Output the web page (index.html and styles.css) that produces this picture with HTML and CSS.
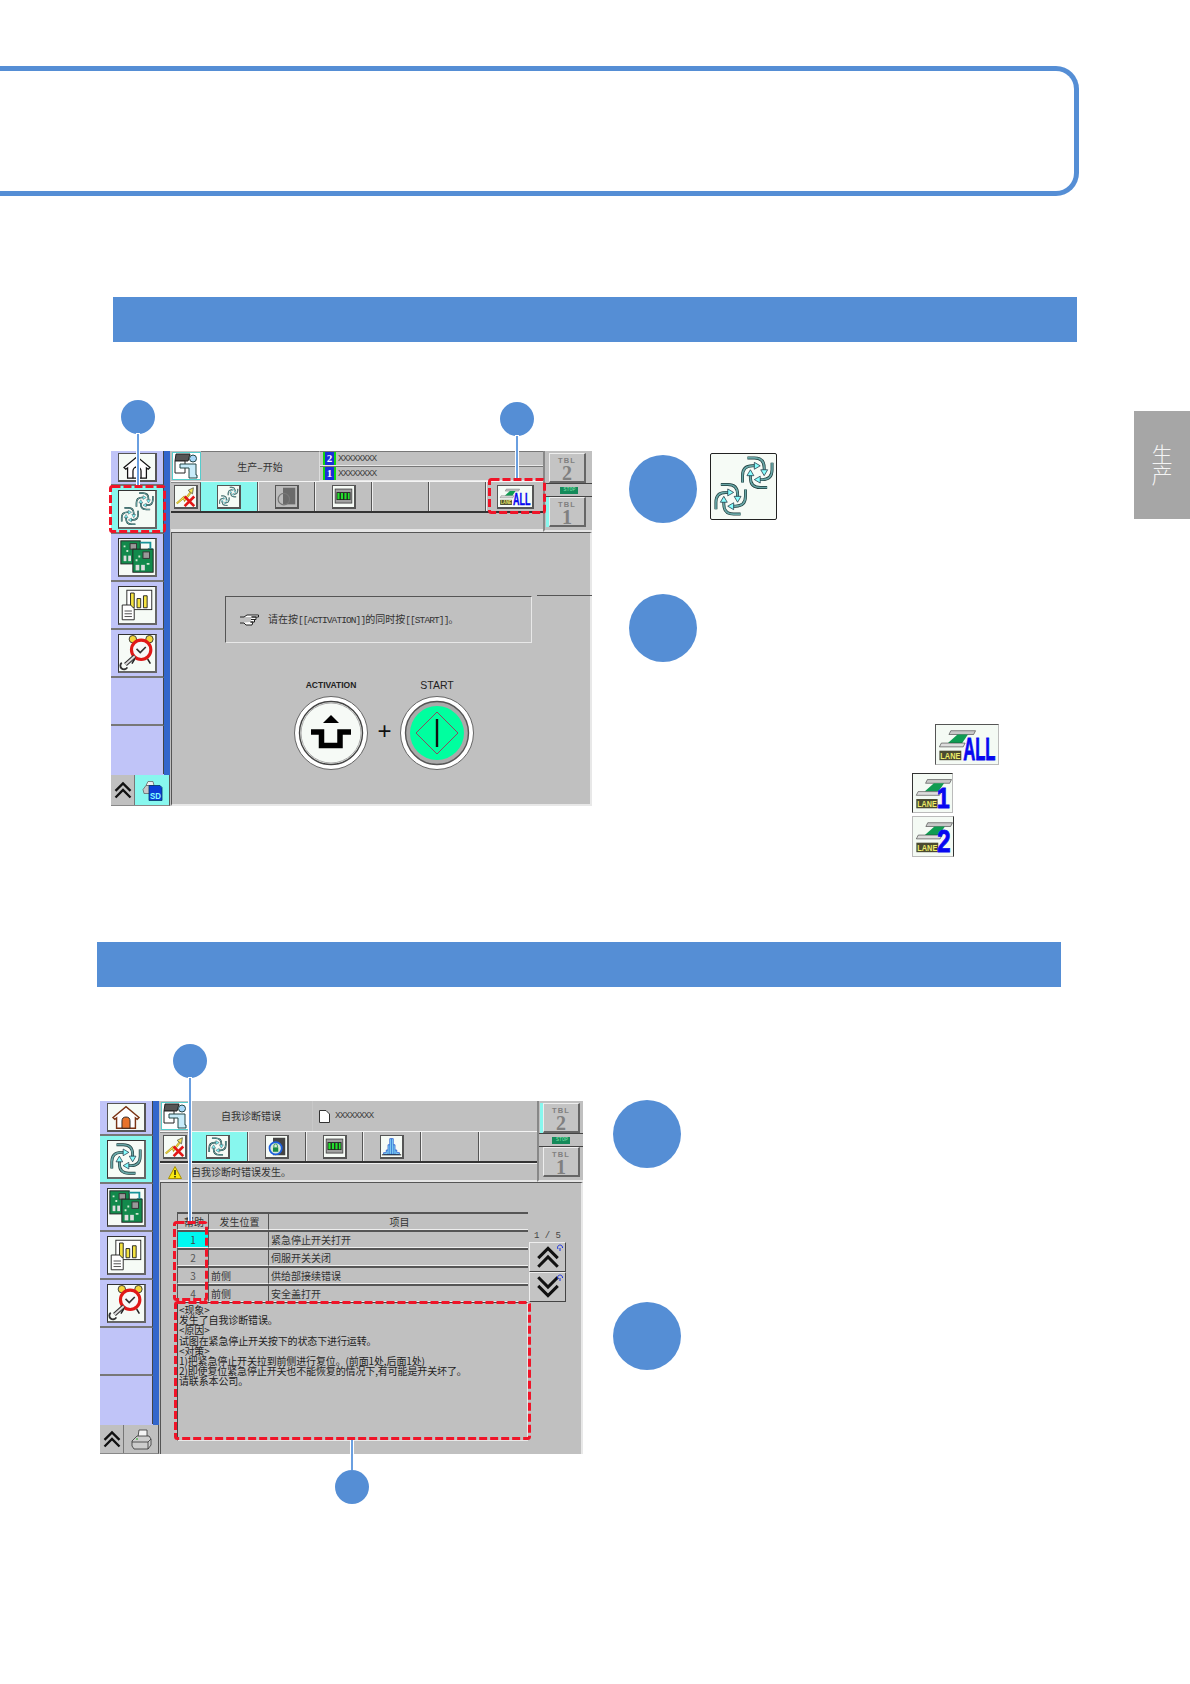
FILE: index.html
```html
<!DOCTYPE html>
<html lang="zh">
<head>
<meta charset="utf-8">
<title>生产</title>
<link rel="stylesheet" href="styles.css">
</head>
<body>
<svg class="defs" width="0" height="0" aria-hidden="true">
  <defs>
    <g id="arm">
      <path d="M-15 10V3Q-15-7-5-7H-2" fill="none" stroke="#1c3a3a" stroke-width="3"/>
      <path d="M-15 10V3Q-15-7-5-7H-2" fill="none" stroke="#68a6a6" stroke-width="1.700"/>
      <path d="M-3-10.500 3-7-3-3.500Z" fill="#8ff" stroke="#123" stroke-width=".7"/>
    </g>
    <g id="pin">
      <use href="#arm"/>
      <use href="#arm" transform="rotate(90)"/>
      <use href="#arm" transform="rotate(180)"/>
      <use href="#arm" transform="rotate(270)"/>
    </g>
    <symbol id="swirl-two" viewBox="0 0 66 66"><use href="#pin" transform="translate(20 46)"/><use href="#pin" transform="translate(47 19)"/></symbol>
    <symbol id="swirl-one" viewBox="-19 -19 38 38"><use href="#pin"/></symbol>
    <symbol id="home-a" viewBox="0 0 39 29">
      <path fill="#fff" stroke="#111" stroke-width="1.400" d="M5 15 19.500 3 34 15 32 17 30 15.500V27H9V15.500L7 17Z"/>
      <path fill="none" stroke="#111" stroke-width="1.400" d="M15 27V19a4.500 4.500 0 0 1 9 0V27"/>
    </symbol>
    <symbol id="home-b" viewBox="0 0 39 29">
      <path fill="#fff" stroke="#7a3414" stroke-width="1.600" d="M5 15 19.500 3 34 15 32 17 30 15.500V27H9V15.500L7 17Z"/>
      <path fill="#e8722a" stroke="#222" d="M15 27V19a4.500 4.500 0 0 1 9 0V27Z"/>
    </symbol>
    <symbol id="pcb" viewBox="0 0 39 39">
      <rect x="2" y="2" width="21" height="25" fill="#128a4c" stroke="#222"/>
      <rect x="12" y="5" width="7" height="6" fill="#999" stroke="#333"/>
      <rect x="5" y="18" width="3" height="6" fill="#ddd"/><rect x="10" y="18" width="3" height="6" fill="#ddd"/>
      <path d="M5 7h2v2H5zM8 12h2v2H8z" fill="#cfe8cf"/>
      <path d="M23 4H34V10" fill="none" stroke="#17949a" stroke-width="2"/><path d="M31 10H37L34 14Z" fill="#17949a"/>
      <rect x="15" y="11" width="22" height="25" fill="#128a4c" stroke="#222"/>
      <rect x="26" y="14" width="7" height="7" fill="#999" stroke="#333"/>
      <rect x="18" y="28" width="4" height="6" fill="#ddd"/><rect x="24" y="28" width="4" height="6" fill="#ddd"/>
      <path d="M18 22h2v2h-2zM21 18h2v2h-2zM30 26h3v2h-3z" fill="#cfe8cf"/>
    </symbol>
    <symbol id="chart" viewBox="0 0 39 39">
      <rect x="8.500" y="3.500" width="27" height="21" fill="#fff" stroke="#222"/>
      <path d="M12.500 6.500h4v16h-4zM19.500 12.500h4v10h-4zM26.500 9.500h4v13h-4z" fill="#f5e342" stroke="#222"/>
      <path d="M3.500 19.500h9l4 4v12h-13z" fill="#fff" stroke="#222"/>
      <path d="M6 26h8M6 29h8M6 32h8" stroke="#444"/>
    </symbol>
    <symbol id="alarm" viewBox="0 0 39 39">
      <circle cx="15" cy="4.500" r="4" fill="#f3d53a" stroke="#333"/><circle cx="33" cy="4.500" r="4" fill="#f3d53a" stroke="#333"/>
      <path d="M17 26 14 31M31 26 34 31" stroke="#222" stroke-width="1.600"/>
      <circle cx="24" cy="16" r="10.500" fill="#f8f8f8" stroke="#e01818" stroke-width="3.400"/>
      <path d="M19 15 23 19 29 13" fill="none" stroke="#333" stroke-width="1.800"/>
      <path d="M17 23 7 32" stroke="#333" stroke-width="4.500"/><path d="M17 23 7 32" stroke="#ddd" stroke-width="2"/>
      <path d="M3 30a4 4 0 1 0 6 5" fill="none" stroke="#333" stroke-width="2"/>
    </symbol>
    <symbol id="person" viewBox="0 0 29 28">
      <rect x=".5" y=".5" width="28" height="27" fill="#fff" stroke="#5cc"/>
      <path d="M4 2 18 2 16 9 3 9Z" fill="#555" stroke="#222"/>
      <path d="M3 9H13V21H3Z" fill="#fff" stroke="#222"/>
      <circle cx="21" cy="6.500" r="3.500" fill="#a8d8f8" stroke="#244"/>
      <path d="M8 12H24V23H25V26H17V16H8Z" fill="#c8ecfa" stroke="#244"/>
    </symbol>
    <symbol id="cancel" viewBox="0 0 24 24">
      <path d="M2 20 10 13 11 16 19 6" fill="none" stroke="#b89a20" stroke-width="2.400"/><path d="M2 20 10 13 11 16 19 6" fill="none" stroke="#f7ea52" stroke-width="1.100"/>
      <path d="M15 5 21 2 20 9Z" fill="#f7ea52" stroke="#665"/>
      <path d="M11 12 22 23M22 12 11 23" stroke="#e21616" stroke-width="3"/>
    </symbol>
    <symbol id="led" viewBox="0 0 24 24">
      <rect x="2.500" y="3.500" width="19" height="16" fill="#a0a0a0" stroke="#444"/>
      <rect x="4" y="7" width="16" height="9" fill="#222"/>
      <path d="M5 8h2.500v7H5zM13 8h2.500v7H13zM17 8h2v7h-2z" fill="#22e02c"/><path d="M9 8h2.500v7H9z" fill="#22e02c"/>
    </symbol>
    <symbol id="dim-doc" viewBox="0 0 24 24">
      <path d="M8 2H22V21H8Z" fill="#6a6a6a"/>
      <circle cx="9" cy="15" r="6.500" fill="none" stroke="#787878" stroke-width="1.400"/>
    </symbol>
    <symbol id="lock-doc" viewBox="0 0 24 24">
      <path d="M8 2H22V22H8Z" fill="#444"/>
      <circle cx="11" cy="14" r="7" fill="#d8e8d8" stroke="#1b60e0" stroke-width="2"/>
      <path d="M8 13h6v5H8z" fill="#188a44"/><path d="M9 13v-2a2 2 0 0 1 4 0v2" fill="none" stroke="#188a44"/>
    </symbol>
    <symbol id="bell-curve" viewBox="0 0 24 24">
      <path d="M3 21V19H6V16H8V10H10V3H14V10H16V16H18V19H21V21Z" fill="#8be0f8" stroke="#1448c8" stroke-width=".8"/>
      <path d="M8 21V16M10 21V10M12 21V3M14 21V10M16 21V16" stroke="#1448c8" stroke-width=".7"/>
      <path d="M1 21.500H23" stroke="#111"/>
    </symbol>
    <symbol id="chev-up" viewBox="0 0 24 24"><path d="M3 13 12 4 21 13M3 21 12 12 21 21" fill="none" stroke="#111" stroke-width="2.800"/></symbol>
    <symbol id="chev-down" viewBox="0 0 24 24"><path d="M3 3 12 12 21 3M3 11 12 20 21 11" fill="none" stroke="#111" stroke-width="2.800"/></symbol>
    <symbol id="sd-print" viewBox="0 0 21 20">
      <path d="M1 9 4 5H10V13H2Z" fill="#c8c8c8" stroke="#666" stroke-width=".8"/><path d="M4 5 6 1H11L12 5Z" fill="#eee" stroke="#666" stroke-width=".8"/>
      <path d="M7 5H18L20 7V20H7Z" fill="#0b3fd8" stroke="#036" stroke-width=".8"/>
      <text x="13.500" y="18" textLength="11" lengthAdjust="spacingAndGlyphs" class="svg-sd">SD</text>
    </symbol>
    <symbol id="printer" viewBox="0 0 21 21">
      <path d="M7 8 8 1H16L16 8Z" fill="#f4f4f4" stroke="#333" stroke-width=".8"/>
      <path d="M1 12 6 7H18L20 10V16L17 20H3L1 17Z" fill="#ccc" stroke="#333" stroke-width=".8"/>
      <path d="M1 13H17L20 10M17 13V20" fill="none" stroke="#333" stroke-width=".8"/>
      <path d="M5 10h2" stroke="#2a2"/>
    </symbol>
    <symbol id="hand" viewBox="0 0 21 13">
      <path d="M1 4H5L8 2H19.500V4H12.500M12.500 4H17V6.500H12M12 6.500H15.500V9H11.500M11.500 9H14L13 12H7L5 10H1" fill="#fff" stroke="#222"/>
    </symbol>
    <g id="lane-base">
      <path d="M15 6H41L39 10H13Z" fill="#c8c8c8" stroke="#333" stroke-width=".6"/>
      <path d="M22 10H33L27 19H12Z" fill="#0f9c52"/>
      <path d="M5 19H30L28 23H3Z" fill="#ddd" stroke="#333" stroke-width=".6"/>
      <rect x="3" y="27" width="23" height="10" fill="#4a4a30"/>
      <text x="14.500" y="36" text-anchor="middle" textLength="21" lengthAdjust="spacingAndGlyphs" class="svg-lane">LANE</text>
    </g>
    <symbol id="lane-all" viewBox="0 0 64 41">
      <use href="#lane-base"/>
      <text x="28" y="37" textLength="34" lengthAdjust="spacingAndGlyphs" class="svg-big">ALL</text>
    </symbol>
    <symbol id="lane-1" viewBox="0 0 41 41">
      <use href="#lane-base"/>
      <text x="25" y="37" textLength="14" lengthAdjust="spacingAndGlyphs" class="svg-big">1</text>
    </symbol>
    <symbol id="lane-2" viewBox="0 0 41 41">
      <use href="#lane-base"/>
      <text x="25" y="37" textLength="14" lengthAdjust="spacingAndGlyphs" class="svg-big">2</text>
    </symbol>
    <symbol id="btn-activation" viewBox="0 0 74 74">
      <circle cx="37" cy="37" r="36.500" fill="#fff" stroke="#666"/>
      <circle cx="37" cy="37" r="31.500" fill="#f6faf6" stroke="#444" stroke-width="1.400"/>
      <circle cx="37" cy="37" r="30" fill="none" stroke="#aaa"/>
      <path d="M29 27 37 19 45 27Z" fill="#000"/>
      <path d="M17 36H27.500V49.500H46V36H57" fill="none" stroke="#000" stroke-width="5.500"/>
    </symbol>
    <symbol id="btn-start" viewBox="0 0 74 74">
      <circle cx="37" cy="37" r="36.500" fill="#fff" stroke="#666"/>
      <circle cx="37" cy="37" r="31.500" fill="#aaa" stroke="#555" stroke-width="1.400"/>
      <circle cx="37" cy="37" r="27" fill="#00ff9f"/>
      <path d="M37 16 58 37 37 58 16 37Z" fill="none" stroke="#8a4a60"/>
      <path d="M37 23V51" stroke="#111" stroke-width="2.400"/>
    </symbol>
    <symbol id="doc" viewBox="0 0 11 13"><path d="M.5.500H7L10.500 4V12.500H.5Z" fill="#fff" stroke="#333"/></symbol>
    <symbol id="warn" viewBox="0 0 14 13"><path d="M7 .5 13.500 12.500H.5Z" fill="#f8e810" stroke="#a89000"/><path d="M7 4V9M7 10V11.500" stroke="#111" stroke-width="1.400"/></symbol>
    <symbol id="refresh" viewBox="0 0 7 7"><path d="M1 5A2.500 2.500 0 1 1 5.500 4" fill="none" stroke="#1830e0"/><path d="M3 4V7" stroke="#1830e0"/></symbol>
  </defs>
</svg>

<div class="page">
  <div class="outline"></div>

  <div class="bar bar-one"></div>
  <section class="work work-one">
    <div class="screen screen-a">
      <aside class="rail">
        <div class="rail-items">
          <div class="rail-item rail-home"><svg class="ico ico-home"><use href="#home-a"/></svg></div>
          <div class="rail-item rail-on"><svg class="ico ico-rail"><use href="#swirl-two"/></svg></div>
          <div class="rail-item"><svg class="ico ico-rail"><use href="#pcb"/></svg></div>
          <div class="rail-item"><svg class="ico ico-rail"><use href="#chart"/></svg></div>
          <div class="rail-item"><svg class="ico ico-rail"><use href="#alarm"/></svg></div>
          <div class="rail-item"></div>
          <div class="rail-item"></div>
        </div>
        <div class="rail-foot">
          <div class="foot-up"><svg class="chev-foot"><use href="#chev-up"/></svg></div>
          <div class="foot-tool foot-on"><svg class="foot-svg"><use href="#sd-print"/></svg></div>
        </div>
      </aside>
      <div class="main">
        <div class="top">
          <div class="top-left">
            <div class="head-row">
              <svg class="person"><use href="#person"/></svg>
              <div class="title title-a">生产–开始</div>
              <div class="lots">
                <div class="lot"><span class="lot-no">2</span><span class="lot-name">XXXXXXXX</span></div>
                <div class="lot"><span class="lot-no">1</span><span class="lot-name">XXXXXXXX</span></div>
              </div>
            </div>
            <div class="tab-row">
              <div class="tab tab-x"><svg class="ico ico-tab"><use href="#cancel"/></svg></div>
              <div class="tab tab-on"><svg class="ico ico-tab"><use href="#swirl-two"/></svg></div>
              <div class="tab"><svg class="ico ico-tab ico-dim"><use href="#dim-doc"/></svg></div>
              <div class="tab"><svg class="ico ico-tab"><use href="#led"/></svg></div>
              <div class="tab"></div>
              <div class="tab"></div>
              <div class="tab"><svg class="ico ico-lane"><use href="#lane-all"/></svg></div>
            </div>
            <div class="msg-row"></div>
          </div>
          <div class="tables tables-a">
            <div class="tbl"><span class="tbl-name">TBL</span><span class="tbl-no">2</span></div>
            <div class="status"><span class="pill">STOP</span></div>
            <div class="tbl tbl-lit"><span class="tbl-name">TBL</span><span class="tbl-no">1</span></div>
          </div>
        </div>
        <div class="panel panel-a">
          <div class="notice">
            <svg class="hand"><use href="#hand"/></svg>
            <span class="notice-text">请在按<span class="mono">[[ACTIVATION]]</span>的同时按<span class="mono">[[START]]</span>。</span>
          </div>
          <div class="actions">
            <div class="action"><div class="action-label action-bold">ACTIVATION</div><svg class="push"><use href="#btn-activation"/></svg></div>
            <div class="plus">+</div>
            <div class="action"><div class="action-label">START</div><svg class="push"><use href="#btn-start"/></svg></div>
          </div>
        </div>
      </div>
      <div class="call call-a"><i class="dot"></i><i class="lead lead-a"></i></div>
      <div class="call call-b"><i class="dot"></i><i class="lead lead-b"></i></div>
      <svg class="mark mark-a" width="57" height="48"><rect x="1.500" y="1.500" width="54" height="45" rx="2"/></svg>
      <svg class="mark mark-b" width="58" height="36"><rect x="1.500" y="1.500" width="55" height="33" rx="2"/></svg>
    </div>

    <div class="steps steps-one">
      <div class="step step-1"><i class="num"></i><svg class="big-icon"><use href="#swirl-two"/></svg></div>
      <div class="step step-2"><i class="num"></i></div>
      <svg class="lane-pic lane-all"><use href="#lane-all"/></svg>
      <svg class="lane-pic lane-1"><use href="#lane-1"/></svg>
      <svg class="lane-pic lane-2"><use href="#lane-2"/></svg>
    </div>
  </section>

  <div class="bar bar-two"></div>
  <section class="work work-two">
    <div class="screen screen-b">
      <aside class="rail">
        <div class="rail-items">
          <div class="rail-item rail-home"><svg class="ico ico-home"><use href="#home-b"/></svg></div>
          <div class="rail-item rail-on"><svg class="ico ico-rail"><use href="#swirl-one"/></svg></div>
          <div class="rail-item"><svg class="ico ico-rail"><use href="#pcb"/></svg></div>
          <div class="rail-item"><svg class="ico ico-rail"><use href="#chart"/></svg></div>
          <div class="rail-item"><svg class="ico ico-rail"><use href="#alarm"/></svg></div>
          <div class="rail-item"></div>
          <div class="rail-item"></div>
        </div>
        <div class="rail-foot">
          <div class="foot-up"><svg class="chev-foot"><use href="#chev-up"/></svg></div>
          <div class="foot-tool"><svg class="foot-svg"><use href="#printer"/></svg></div>
        </div>
      </aside>
      <div class="main">
        <div class="top">
          <div class="top-left">
            <div class="head-row">
              <svg class="person"><use href="#person"/></svg>
              <div class="title title-b">自我诊断错误</div>
              <div class="file"><svg class="doc"><use href="#doc"/></svg><span class="lot-name">XXXXXXXX</span></div>
            </div>
            <div class="tab-row">
              <div class="tab tab-x"><svg class="ico ico-tab"><use href="#cancel"/></svg></div>
              <div class="tab tab-on"><svg class="ico ico-tab"><use href="#swirl-one"/></svg></div>
              <div class="tab"><svg class="ico ico-tab"><use href="#lock-doc"/></svg></div>
              <div class="tab"><svg class="ico ico-tab"><use href="#led"/></svg></div>
              <div class="tab"><svg class="ico ico-tab"><use href="#bell-curve"/></svg></div>
              <div class="tab"></div>
              <div class="tab"></div>
            </div>
            <div class="msg-row msg-warn"><svg class="warn"><use href="#warn"/></svg><span>自我诊断时错误发生。</span></div>
          </div>
          <div class="tables tables-b">
            <div class="tbl tbl-lit"><span class="tbl-name">TBL</span><span class="tbl-no">2</span></div>
            <div class="status"><span class="pill">STOP</span></div>
            <div class="tbl"><span class="tbl-name">TBL</span><span class="tbl-no">1</span></div>
          </div>
        </div>
        <div class="panel panel-b">
          <div class="err-col">
            <table class="err-table">
              <thead><tr><th class="col-no">帮助</th><th class="col-place">发生位置</th><th>项目</th></tr></thead>
              <tbody>
                <tr><td class="cell-no cell-on">1</td><td></td><td>紧急停止开关打开</td></tr>
                <tr><td class="cell-no">2</td><td></td><td>伺服开关关闭</td></tr>
                <tr><td class="cell-no">3</td><td>前侧</td><td>供给部接续错误</td></tr>
                <tr><td class="cell-no">4</td><td>前侧</td><td>安全盖打开</td></tr>
              </tbody>
            </table>
            <div class="help">
              <p>&lt;现象&gt;</p>
              <p>发生了自我诊断错误。</p>
              <p>&lt;原因&gt;</p>
              <p>试图在紧急停止开关按下的状态下进行运转。</p>
              <p>&lt;对策&gt;</p>
              <p>1)把紧急停止开关拉到前侧进行复位。(前面1处,后面1处)</p>
              <p>2)即使复位紧急停止开关也不能恢复的情况下,有可能是开关坏了。</p>
              <p>请联系本公司。</p>
            </div>
          </div>
          <div class="pager">
            <div class="pager-count">1 / 5</div>
            <div class="pager-btn"><svg class="chev-page"><use href="#chev-up"/></svg><svg class="tiny"><use href="#refresh"/></svg></div>
            <div class="pager-btn"><svg class="chev-page"><use href="#chev-down"/></svg><svg class="tiny"><use href="#refresh"/></svg></div>
          </div>
        </div>
      </div>
      <div class="call call-c"><i class="dot"></i><i class="lead lead-c"></i></div>
      <div class="call call-d"><i class="lead lead-d"></i><i class="dot"></i></div>
      <svg class="mark mark-c" width="35" height="80"><rect x="1.500" y="1.500" width="32" height="77" rx="2"/></svg>
      <svg class="mark mark-d" width="357" height="139"><rect x="1.500" y="1.500" width="354" height="136" rx="2"/></svg>
    </div>

    <div class="steps steps-two">
      <div class="step step-3"><i class="num"></i></div>
      <div class="step step-4"><i class="num"></i></div>
    </div>
  </section>
</div>

<div class="side-tab">生<br>产</div>
</body>
</html>
```

FILE: styles.css
```css
* { box-sizing: border-box; }
html, body { margin: 0; padding: 0; background: #fff; }
body {
  position: relative;
  width: 1190px;
  height: 1684px;
  overflow: hidden;
  font-family: "Noto Sans CJK SC", "Liberation Sans", sans-serif;
  color: #222;
}
.defs { position: absolute; }

.page { padding-top: 66px; }
.outline {
  width: 1079px;
  height: 130px;
  border: 5px solid #558ed5;
  border-left: 0;
  border-radius: 0 23px 23px 0;
}
.bar { height: 45px; width: 964px; background: #558ed5; }
.bar-one { margin: 101px 0 0 113px; }
.bar-two { margin: 0 0 0 97px; }

.work { display: flex; align-items: flex-start; }
.work-one { margin: 109px 0 0 111px; height: 491px; gap: 37px; }
.work-two { margin: 114px 0 0 100px; gap: 30px; }

/* Touch-panel screenshots */
.screen {
  position: relative;
  display: flex;
  background: #c0c0c0;
  flex: none;
  font-size: 10px;
  line-height: 1;
  color: #333;
}
.screen-a { width: 481px; height: 355px; }
.screen-b { width: 483px; height: 353px; }

.rail { width: 59px; display: flex; flex-direction: column; flex: none; }
.rail-items {
  height: 324px;
  background: #c0c4f8;
  border-right: 6px solid #3366cc;
  display: flex;
  flex-direction: column;
}
.rail-item {
  height: 48px;
  border-bottom: 2px solid #777;
  border-right: 1px solid #444;
  display: flex;
  align-items: center;
  padding-left: 7px;
  flex: none;
}
.rail-home { height: 35px; background: #c0c4f8; }
.rail-on { background: #88f7ee; }
.rail-item:last-child { border-bottom: 0; }
.ico { background: #f6fbf6; display: block; flex: none; }
.ico-rail { width: 39px; height: 39px; border: 1px solid #555; border-width: 1px 2px 2px 1px; border-color: #333 #666 #666 #333; }
.ico-home { width: 39px; height: 29px; border: 1px solid #555; border-width: 1px 2px 2px 1px; }
.rail-foot { flex: 1; display: flex; border-right: 1px solid #555; border-bottom: 1px solid #888; }
.foot-up { width: 24px; display: flex; align-items: center; justify-content: center; border-right: 1px solid #777; }
.chev-foot { width: 20px; height: 20px; }
.foot-tool { flex: 1; display: flex; align-items: center; justify-content: center; }
.foot-on { background: #88f7ee; }
.foot-svg { width: 21px; height: 21px; }

.main { flex: 1; margin-left: 1px; display: flex; flex-direction: column; min-width: 0; }
.top { display: flex; height: 81px; flex: none; }
.top-left { flex: 1; display: flex; flex-direction: column; min-width: 0; }
.head-row { height: 30px; display: flex; align-items: stretch; flex: none; }
.person { width: 29px; height: 28px; margin: 1px 0 0 1px; flex: none; }
.title { display: flex; align-items: center; justify-content: center; font-size: 10px; flex: none; width: 119px; color: #333; }
.title-a { border-top: 1px solid #777; border-right: 1px solid #ddd; }
.title-b { width: 122px; }
.lots { flex: 1; display: flex; flex-direction: column; }
.lot {
  flex: 1;
  display: flex;
  align-items: center;
  border-top: 1px solid #777;
  border-bottom: 1px solid #e8e8e8;
  padding-left: 3px;
  gap: 2px;
}
.lot-no {
  width: 13px;
  height: 13px;
  background: #1a2ed8;
  border: solid #11d811;
  border-width: 0 2px;
  color: #fff;
  font: bold 11px/13px "Liberation Serif", serif;
  text-align: center;
}
.lot-name { font: 9.500px/1 "Liberation Mono", monospace; letter-spacing: -.9px; color: #444; }
.file { display: flex; align-items: center; gap: 5px; padding-left: 6px; border-left: 1px solid #c8c8c8; }
.doc { width: 11px; height: 13px; }

.tab-row {
  height: 32px;
  display: grid;
  grid-template-columns: 30px repeat(6, 1fr);
  border-top: 1px solid #f4f4f4;
  border-bottom: 2px solid #333;
  flex: none;
}
.tab { display: flex; align-items: center; justify-content: center; border-right: 1px solid #555; border-left: 1px solid #eee; }
.tab-x { border-left: 0; border-top: 1px solid #888; background: #c0c0c0; }
.tab-on { background: #88f7ee; border-left: 0; }
.tab:last-child { border-right: 0; }
.ico-tab { width: 24px; height: 24px; border: 1px solid #555; border-width: 1px 2px 2px 1px; }
.ico-dim { background: #bcbcbc; }
.ico-lane { width: 37px; height: 24px; border: 1px solid #555; border-width: 1px 2px 2px 1px; }
.msg-row { flex: 1; border-bottom: 3px solid #e6e6e6; }
.msg-warn { display: flex; align-items: center; padding-left: 8px; gap: 9px; font-size: 10px; border-bottom-width: 2px; border-top: 1px solid #eee; }
.warn { width: 14px; height: 13px; }

.tables { width: 49px; flex: none; display: flex; flex-direction: column; padding: 2px 0 0 4px; border-left: 2px solid #888; border-bottom: 2px solid #e6e6e6; position: relative; }
.tables-b { width: 46px; }
.tbl {
  width: 37px;
  height: 30px;
  background: #c4c4c4;
  border: solid;
  border-width: 1px 2px 2px 1px;
  border-color: #eee #666 #666 #eee;
  display: flex;
  flex-direction: column;
  align-items: center;
  color: #808080;
  flex: none;
}
.tbl-lit { box-shadow: -3px 0 0 #88f7ee; }
.tbl-name { font: bold 7.500px/8px "Liberation Sans", sans-serif; letter-spacing: 1.200px; margin-top: 3px; }
.tbl-no { font: bold 20px/16px "Liberation Serif", serif; }
.status {
  height: 14px;
  margin: 0 0 0 -4px;
  display: flex;
  align-items: center;
  justify-content: center;
  border-top: 1px solid #444;
  border-bottom: 1px solid #444;
  flex: none;
}
.pill { background: #148a5a; color: #7fe0a8; font: 5px/7px "Liberation Mono", monospace; padding: 0 4px; width: 18px; }

.panel {
  flex: 1;
  position: relative;
  border: solid;
  border-width: 1px 2px 2px 1px;
  border-color: #555 #e8e8e8 #e8e8e8 #555;
  min-height: 0;
}
.panel-a { padding: 63px 0 0 53px; }
.panel-a::after {
  content: "";
  position: absolute;
  left: 365px;
  top: 62px;
  right: -2px;
  height: 1px;
  background: #555;
}
.notice {
  width: 307px;
  height: 47px;
  display: flex;
  align-items: center;
  padding-left: 13px;
  gap: 8px;
  border: 1px solid;
  border-color: #555 #e8e8e8 #e8e8e8 #555;
}
.hand { width: 21px; height: 13px; flex: none; }
.notice-text { font-size: 10px; white-space: nowrap; color: #333; }
.mono { font: 9.500px/1 "Liberation Mono", monospace; letter-spacing: -.9px; }
.actions { display: flex; align-items: flex-end; margin: 36px 0 0 69px; }
.action { width: 74px; display: flex; flex-direction: column; align-items: center; gap: 5px; }
.action-label { font: 10.500px/12px "Liberation Sans", sans-serif; color: #222; }
.action-bold { font-weight: bold; font-size: 8.500px; }
.push { width: 74px; height: 74px; display: block; }
.plus { width: 32px; height: 74px; display: flex; align-items: center; justify-content: center; font: 24px/1 "Liberation Sans", sans-serif; color: #111; padding: 0 0 4px 1px; }

.panel-b { display: flex; padding: 29px 0 0 16px; border-bottom: 0; }
.err-col { width: 351px; flex: none; }
.err-table {
  width: 351px;
  table-layout: fixed;
  border-collapse: separate;
  border-spacing: 0;
  font-size: 10px;
}
.err-table th, .err-table td {
  height: 18px;
  padding: 0 0 0 2px;
  border-top: 2px solid #555;
  border-left: 1px solid #555;
  border-bottom: 1px solid #eee;
  font-weight: 400;
  text-align: left;
  white-space: nowrap;
  color: #333;
  overflow: hidden;
}
.err-table th { text-align: center; height: 18px; }
.col-no { width: 31px; }
.col-place { width: 60px; }
.err-table .cell-no { text-align: center; padding: 0; color: #555; }
.err-table .cell-on { background: #00f8f0; color: #444; }
.help {
  height: 139px;
  padding: 2px 0 0 1px;
  border: 1px solid;
  border-color: #444 #e8e8e8 #e8e8e8 #444;
  font-size: 10px;
  line-height: 10.200px;
  letter-spacing: -.13px;
  color: #222;
  overflow: hidden;
}
.help p { margin: 0; white-space: nowrap; }
.pager { width: 37px; margin-left: 1px; padding-top: 18px; flex: none; }
.pager-count { font: 9px/12px "Liberation Mono", monospace; text-align: center; color: #444; white-space: nowrap; }
.pager-btn {
  position: relative;
  height: 30px;
  background: #c4c4c4;
  border: 1px solid;
  border-color: #eee #444 #444 #eee;
  display: flex;
  align-items: center;
  justify-content: center;
}
.chev-page { width: 26px; height: 26px; }
.tiny { position: absolute; right: 1px; top: 1px; width: 7px; height: 7px; }

/* Callouts laid over the screenshots */
.call { position: absolute; display: flex; flex-direction: column; align-items: center; width: 34px; z-index: 3; }
.dot { display: block; width: 34px; height: 34px; border-radius: 50%; background: #558ed5; flex: none; }
.lead { display: block; width: 2px; background: #6a9fe0; box-shadow: 0 0 0 1px #fff; flex: none; }
.call-a { left: 10px; top: -51px; }
.lead-a { height: 51px; }
.call-b { left: 389px; top: -49px; }
.lead-b { height: 42px; }
.call-c { left: 73px; top: -57px; }
.lead-c { height: 144px; }
.call-d { left: 235px; top: 338px; }
.lead-d { height: 31px; }
.mark { position: absolute; z-index: 4; overflow: visible; }
.mark rect { fill: none; stroke: #f01428; stroke-width: 3; stroke-dasharray: 8 3; }
.mark-a { left: -2px; top: 34px; }
.mark-b { left: 377px; top: 27px; }
.mark-c { left: 73px; top: 120px; }
.mark-d { left: 74px; top: 200px; }

/* Numbered steps beside the screenshots */
.steps { flex: none; display: flex; flex-direction: column; align-items: flex-start; }
.num { display: block; width: 68px; height: 68px; border-radius: 50%; background: #558ed5; flex: none; }
.step { display: flex; gap: 13px; }
.step-1 { margin-top: 4px; height: 68px; }
.big-icon { width: 67px; height: 67px; margin-top: -2px; background: #f6fbf6; border: 1px solid #222; border-radius: 2px; }
.step-2 { margin-top: 71px; }
.lane-pic { display: block; background: #f4faf4; border: 1px solid #999; }
.lane-all { width: 64px; height: 41px; margin: 62px 0 0 306px; border-color: #555 #bbb #bbb #555; }
.lane-1 { width: 41px; height: 40px; margin: 8px 0 0 283px; border-color: #333 #bbb #bbb #333; }
.lane-2 { width: 42px; height: 41px; margin: 3px 0 0 283px; border-color: #bbb #333 #bbb #bbb; }
.step-3 { margin-top: -1px; }
.step-4 { margin-top: 134px; }

.svg-sd { font: bold 9px "Liberation Sans", sans-serif; fill: #8ff; text-anchor: middle; }
.svg-lane { font: bold 10.500px "Liberation Sans", sans-serif; fill: #ecec6a; }
.svg-big { font: bold 32px "Liberation Sans", sans-serif; fill: #0808f0; stroke: #0808f0; stroke-width: .9; }

.side-tab {
  position: absolute;
  left: 1134px;
  top: 411px;
  width: 56px;
  height: 108px;
  background: #a6a6a6;
  color: #f4f4f4;
  font-size: 21px;
  line-height: 21px;
  font-weight: 300;
  text-align: center;
  padding-top: 32px;
}
```
